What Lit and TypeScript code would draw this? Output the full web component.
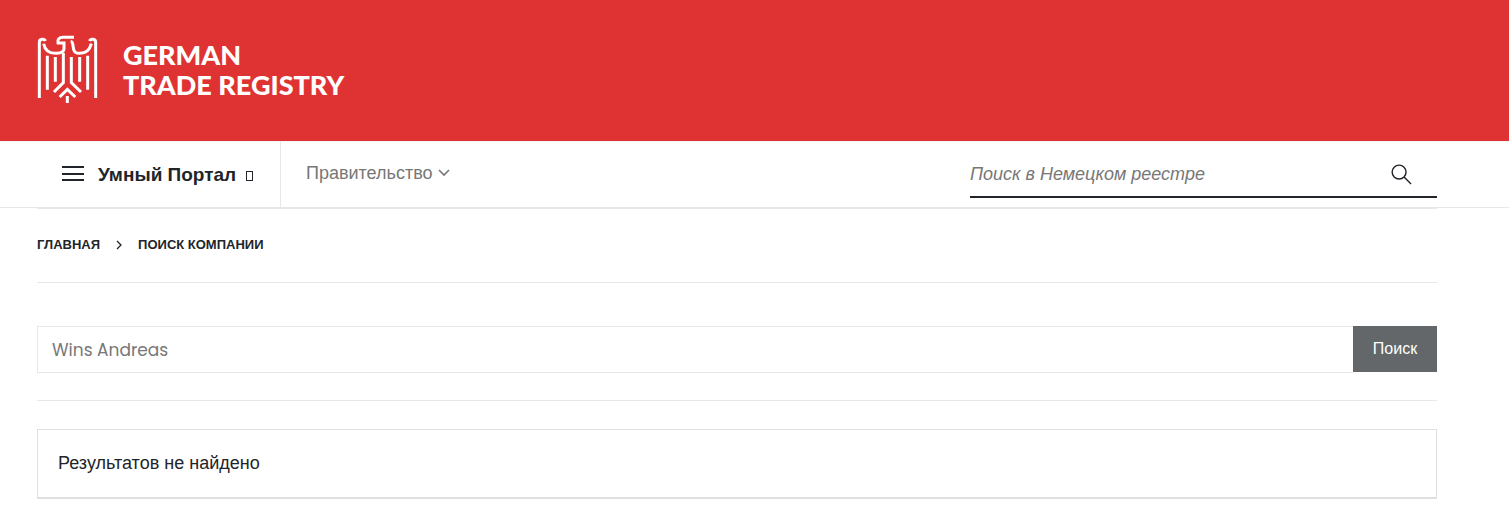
import { LitElement, html, css } from "lit";
import { customElement, state } from "lit/decorators.js";

@customElement("app-root")
export class AppRoot extends LitElement {
  static styles = css`
    :host {
      display: block;
      font-family: "Liberation Sans", Arial, sans-serif;
      font-size: 18px;
      line-height: 28px;
      color: #212529;
      background: #fff;
    }
    *,
    *::before,
    *::after {
      box-sizing: border-box;
    }
    a {
      color: inherit;
      text-decoration: none;
    }
    button,
    input {
      font: inherit;
      color: inherit;
      margin: 0;
      padding: 0;
      border: 0;
      border-radius: 0;
      background: none;
      outline: none;
    }
    button {
      cursor: pointer;
    }
    svg {
      display: block;
      fill: none;
      flex: none;
    }
    .wrap {
      padding: 0 72px 0 37px;
    }
    .banner {
      background: #df3333;
      padding-top: 34px;
      padding-bottom: 37px;
    }
    .logo {
      display: inline-flex;
      align-items: center;
      gap: 25px;
      vertical-align: top;
      color: #fff;
      font-family: Lato, sans-serif;
      font-weight: 900;
      font-size: 27px;
      line-height: 30px;
    }
    .logo svg {
      stroke: #fff;
      stroke-width: 9;
    }
    .line {
      display: block;
    }
    .wordmark {
      padding-top: 2px;
    }
    .nav {
      border-top: 1px solid #f4f4f4;
      border-bottom: 1px solid #e7e7e7;
    }
    .bar {
      display: flex;
      height: 65px;
    }
    .portal {
      display: flex;
      align-items: center;
      width: 244px;
      padding-left: 25px;
      border-right: 1px solid #e7e7e7;
      font-size: 19px;
      font-weight: 700;
    }
    .portal svg {
      margin-right: 14px;
      margin-bottom: 3px;
      stroke: #212529;
      stroke-width: 2;
    }
    .missing {
      width: 7px;
      height: 10px;
      margin: 3px 0 0 10px;
      border: 1px solid #212529;
    }
    .menu {
      display: flex;
      align-items: center;
      gap: 5px;
      margin-left: 25px;
      padding-bottom: 4px;
      color: #777;
    }
    .menu svg {
      stroke: #777;
      stroke-width: 1.6;
    }
    .quick {
      display: flex;
      align-items: center;
      width: 467px;
      height: 48px;
      margin: 8px 0 0 auto;
      padding-top: 2px;
      border-bottom: 2px solid #212529;
    }
    .quick input {
      flex: 1;
      min-width: 0;
      height: 44px;
      font-style: italic;
    }
    ::placeholder {
      color: #777;
      opacity: 1;
    }
    .quick button {
      margin-right: 25px;
    }
    .quick svg {
      stroke: #212529;
      stroke-width: 1.5;
    }
    .crumbs {
      display: flex;
      align-items: center;
      gap: 16px;
      height: 75px;
      padding-bottom: 2px;
      border-top: 1px solid #e7e7e7;
      border-bottom: 1px solid #e7e7e7;
      font-size: 13px;
      font-weight: 700;
      line-height: 20px;
      text-transform: uppercase;
    }
    .crumbs svg {
      stroke: #212529;
      stroke-width: 1.3;
    }
    .search {
      display: flex;
      align-items: flex-start;
      padding: 43px 0 27px;
      border-bottom: 1px solid #e7e7e7;
      font-size: 16px;
    }
    .search input {
      flex: 1;
      min-width: 0;
      height: 47px;
      padding: 0 15px 0 14px;
      border: 1px solid #e7e7e7;
      border-right: 0;
      color: #777;
      font-family: Poppins, "Open Sans", sans-serif;
      font-size: 17px;
    }
    .search button {
      width: 84px;
      height: 46px;
      background: #636769;
      color: #fff;
    }
    .result {
      margin: 28px 0;
      padding: 19px 20px 20px;
      border: 1px solid #dfdfdf;
      border-bottom-width: 2px;
    }
    .result p {
      margin: 0;
    }
  `;

  @state() private query = "Wins Andreas";

  private onInput(e: Event) {
    this.query = (e.target as HTMLInputElement).value;
  }

  render() {
    return html`
      <header>
        <div class="banner wrap">
          <a class="logo" href="#">
            <svg width="61" height="70" viewBox="36 27 183 210" aria-hidden="true">
              <path d="M43 219V52Q43 44 51 43Q59 42 61 48M212 219V52Q212 44 204 43Q196 42 194 48" />
              <path d="M56 56C60 78 76 86 96 85Q115 84 117 72V54H99C96 44 102 37 114 37H147M137 49Q142 50 143 56L146 74Q149 85 162 85C181 86 194 76 199 56" />
              <path d="M67 92V194M188 92V194M91 96V170M164 96V170M115 84V173L87 201M139 96V173L168 201" />
              <path d="M104 216L127 193L151 216M127 213V234" />
            </svg>
            <span class="wordmark">
              <span class="line">GERMAN</span>
              <span class="line">TRADE REGISTRY</span>
            </span>
          </a>
        </div>
        <div class="nav">
          <div class="bar wrap">
            <button class="portal" type="button">
              <svg width="22" height="16" viewBox="0 0 22 16" aria-hidden="true">
                <path d="M0 2H22M0 9H22M0 15H22" />
              </svg>
              Умный Портал
              <span class="missing"></span>
            </button>
            <a class="menu" href="#">
              Правительство
              <svg width="12" height="8" viewBox="0 0 12 8" aria-hidden="true">
                <path d="M1 1L6 6L11 1" />
              </svg>
            </a>
            <form class="quick" @submit=${(e: Event) => e.preventDefault()}>
              <input type="text" aria-label="Поиск в Немецком реестре" placeholder="Поиск в Немецком реестре" />
              <button type="submit" aria-label="Поиск">
                <svg width="21" height="21" viewBox="0 0 22 22">
                  <circle cx="8.5" cy="8.5" r="7.3" />
                  <path d="M13.7 13.7L21 21" />
                </svg>
              </button>
            </form>
          </div>
        </div>
      </header>
      <main class="wrap">
        <nav class="crumbs">
          <a href="#">Главная</a>
          <svg width="6" height="10" viewBox="0 0 6 10" aria-hidden="true"><path d="M1 1L5 5L1 9" /></svg>
          <a href="#">Поиск компании</a>
        </nav>
        <form class="search" @submit=${(e: Event) => e.preventDefault()}>
          <input type="text" aria-label="Поиск компании" .value=${this.query} @input=${this.onInput} />
          <button type="submit">Поиск</button>
        </form>
        <section class="result"><p>Результатов не найдено</p></section>
      </main>
    `;
  }
}
